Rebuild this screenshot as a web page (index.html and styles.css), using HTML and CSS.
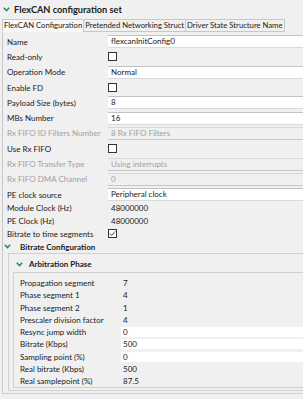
FILE: index.html
```html
<!DOCTYPE html>
<html>
<head>
<meta charset="utf-8">
<link rel="stylesheet" href="styles.css">
</head>
<body>
<div class="title"><svg class="chev" width="7" height="5" viewBox="0 0 7 5"><path d="M0.8 0.8 L3.5 3.6 L6.2 0.8" fill="none" stroke="#1f8a70" stroke-width="1.5"/></svg><span>FlexCAN configuration set</span></div>
<div class="tabs">
  <div class="tab sel">FlexCAN Configuration</div>
  <div class="tab">Pretended Networking Struct</div>
  <div class="tab">Driver State Structure Name</div>
</div>
<div class="panel">
  <div class="row"><span class="lbl">Name</span><span class="inp">flexcanInitConfig0</span></div>
  <div class="row"><span class="lbl">Read-only</span><span class="cb"></span></div>
  <div class="row"><span class="lbl">Operation Mode</span><span class="inp">Normal</span></div>
  <div class="row"><span class="lbl">Enable FD</span><span class="cb"></span></div>
  <div class="row"><span class="lbl">Payload Size (bytes)</span><span class="inp">8</span></div>
  <div class="row"><span class="lbl">MBs Number</span><span class="inp">16</span></div>
  <div class="row dis"><span class="lbl">Rx FIFO ID Filters Number</span><span class="inp">8 Rx FIFO Filters</span></div>
  <div class="row"><span class="lbl">Use Rx FIFO</span><span class="cb"></span></div>
  <div class="row dis"><span class="lbl">Rx FIFO Transfer Type</span><span class="inp">Using interrupts</span></div>
  <div class="row dis"><span class="lbl">Rx FIFO DMA Channel</span><span class="inp">0</span></div>
  <div class="row"><span class="lbl">PE clock source</span><span class="inp">Peripheral clock</span></div>
  <div class="row sm"><span class="lbl">Module Clock (Hz)</span><span class="txt">48000000</span></div>
  <div class="row sm"><span class="lbl">PE Clock (Hz)</span><span class="txt">48000000</span></div>
  <div class="row md"><span class="lbl">Bitrate to time segments</span><span class="cb chk"><svg width="7" height="7" viewBox="0 0 7 7"><path d="M0.8 3.6 L2.7 5.4 L6.3 1.2" fill="none" stroke="#333" stroke-width="0.9"/></svg></span></div>
  <div class="subhead"><svg class="chev" width="7" height="5" viewBox="0 0 7 5"><path d="M0.8 0.8 L3.5 3.6 L6.2 0.8" fill="none" stroke="#1f8a70" stroke-width="1.5"/></svg><span>Bitrate Configuration</span></div>
  <div class="frame">
    <div class="subhead2"><svg class="chev" width="7" height="5" viewBox="0 0 7 5"><path d="M0.8 0.8 L3.5 3.6 L6.2 0.8" fill="none" stroke="#1f8a70" stroke-width="1.5"/></svg><span>Arbitration Phase</span></div>
    <div class="inner">
      <div class="irow"><span class="ilbl">Propagation segment</span><span class="itxt">7</span></div>
      <div class="irow"><span class="ilbl">Phase segment 1</span><span class="itxt">4</span></div>
      <div class="irow"><span class="ilbl">Phase segment 2</span><span class="itxt">1</span></div>
      <div class="irow"><span class="ilbl">Prescaler division factor</span><span class="itxt">4</span></div>
      <div class="irow"><span class="ilbl">Resync jump width</span><span class="iinp">0</span></div>
      <div class="irow"><span class="ilbl">Bitrate (Kbps)</span><span class="iinp">500</span></div>
      <div class="irow"><span class="ilbl">Sampling point (%)</span><span class="iinp">0</span></div>
      <div class="irow"><span class="ilbl">Real bitrate (Kbps)</span><span class="itxt">500</span></div>
      <div class="irow"><span class="ilbl">Real samplepoint (%)</span><span class="itxt">87.5</span></div>
    </div>
  </div>
</div>
</body>
</html>
```
FILE: styles.css
```css
html, body { margin: 0; padding: 0; }
body {
  background: #f0f0f0;
  font-family: Lato, "Noto Sans", sans-serif;
  font-size: 8px;
  color: #1a1a1a;
  width: 303px;
  height: 399px;
  overflow: hidden;
}
.title {
  display: flex;
  align-items: center;
  height: 19px;
  padding-left: 3px;
  font-weight: bold;
  font-size: 9.2px;
  gap: 4px;
}
.chev { flex: none; }
.tabs {
  display: flex;
  height: 13px;
  margin-left: 2px;
  font-size: 7.7px;
}
.tab {
  border: 1px solid #c8c8c8;
  padding: 0 1px;
  line-height: 11px;
  white-space: nowrap;
  margin-left: -1px;
  background: #f0f0f0;
}
.tab.sel {
  background: #f7f7f7;
  border-bottom-color: #f7f7f7;
  margin-left: 0;
}
.panel {
  border-left: 1px solid #c8c8c8;
  border-bottom: 1px solid #d0d0d0;
  margin-left: 2px;
  padding-top: 2px;
  padding-bottom: 2px;
}
.row {
  display: flex;
  align-items: center;
  height: 15.3px;
}
.row.sm { height: 12.4px; }
.row.md { height: 13px; }
.lbl {
  width: 101px;
  padding-left: 4px;
  flex: none;
  white-space: nowrap;
}
.inp {
  flex: 1;
  background: #fff;
  border-top: 1px solid #c2c2c2;
  border-bottom: 1px solid #dadada;
  height: 11px;
  line-height: 11px;
  padding-left: 3px;
  white-space: nowrap;
}
.dis { color: #a0a0a0; }
.dis .inp { background: #f0f0f0; border-top-color: #d8d8d8; border-bottom-color: #c8c8c8; }
.txt { padding-left: 3px; }
.cb {
  width: 7px;
  height: 7px;
  border: 1px solid #333;
  background: #fff;
  position: relative;
}
.cb svg { position: absolute; left: 0; top: 0; }
.subhead, .subhead2 {
  display: flex;
  align-items: center;
  font-weight: bold;
}
.subhead {
  height: 13px;
  padding-left: 1px;
  gap: 9px;
}
.frame {
  margin-left: 5px;
  border-top: 1px solid #d0d0d0;
  border-left: 1px solid #d0d0d0;
  border-bottom: 1px solid #d0d0d0;
  padding-top: 3px;
  padding-bottom: 2px;
}
.subhead2 {
  height: 14px;
  padding-left: 7px;
  gap: 6px;
}
.inner {
  margin: 1px 0 0 4px;
  border-top: 1px solid #d0d0d0;
  border-left: 1px solid #d0d0d0;
  border-bottom: 1px solid #d0d0d0;
  padding-top: 4px;
}
.irow {
  display: flex;
  align-items: center;
  height: 12.25px;
}
.ilbl {
  width: 101px;
  padding-left: 6px;
  flex: none;
  white-space: nowrap;
}
.itxt { padding-left: 2px; }
.iinp {
  flex: 1;
  background: #fff;
  height: 10px;
  line-height: 10px;
  padding-left: 2px;
}
```
